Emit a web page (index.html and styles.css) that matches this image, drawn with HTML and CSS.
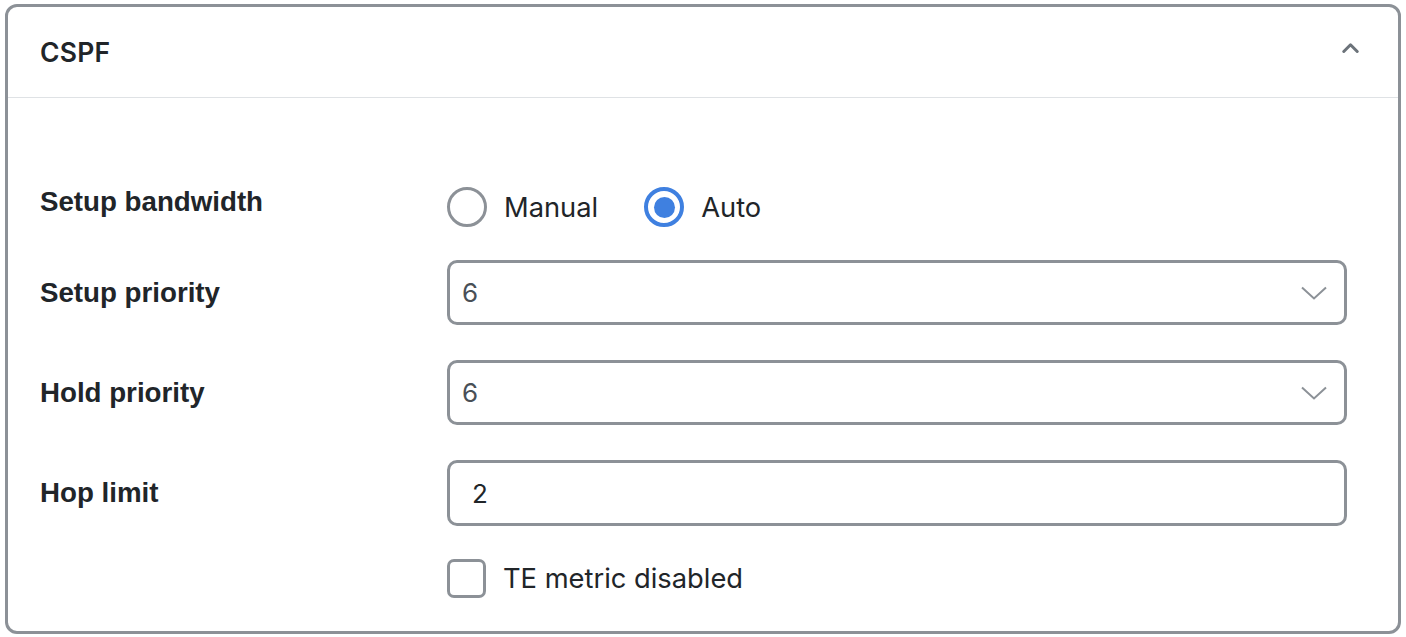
FILE: index.html
```html
<!DOCTYPE html>
<html lang="en">
<head>
<meta charset="utf-8">
<title>CSPF</title>
<link rel="stylesheet" href="styles.css">
</head>
<body>
<section class="card">
  <header class="card-header">
    <h2 class="card-title">CSPF</h2>
    <svg class="collapse-icon" width="17" height="10" viewBox="0 0 17 10" aria-hidden="true">
      <polyline points="1.8,8.5 8.5,1.8 15.2,8.5" fill="none" stroke="#6c737a" stroke-width="3" stroke-linecap="round" stroke-linejoin="round"/>
    </svg>
  </header>
  <div class="card-body">
    <div class="row row-radio">
      <div class="label label-top">Setup bandwidth</div>
      <div class="radio-group">
        <label class="radio-option"><span class="radio"></span><span class="opt-text">Manual</span></label>
        <label class="radio-option"><span class="radio checked"><span class="dot"></span></span><span class="opt-text">Auto</span></label>
      </div>
    </div>
    <div class="row row-field">
      <div class="label">Setup priority</div>
      <div class="select"><span class="value">6</span>
        <svg class="caret" width="26" height="14" viewBox="0 0 26 14" aria-hidden="true"><polyline points="1,1.5 13,12.5 25,1.5" fill="none" stroke="#8c9197" stroke-width="2"/></svg>
      </div>
    </div>
    <div class="row row-field">
      <div class="label">Hold priority</div>
      <div class="select"><span class="value">6</span>
        <svg class="caret" width="26" height="14" viewBox="0 0 26 14" aria-hidden="true"><polyline points="1,1.5 13,12.5 25,1.5" fill="none" stroke="#8c9197" stroke-width="2"/></svg>
      </div>
    </div>
    <div class="row row-input">
      <div class="label">Hop limit</div>
      <div class="input"><span class="value dark">2</span></div>
    </div>
    <div class="row row-check">
      <div class="label"></div>
      <label class="check-option"><span class="checkbox"></span><span class="opt-text">TE metric disabled</span></label>
    </div>
  </div>
</section>
</body>
</html>
```
FILE: styles.css
```css
* { box-sizing: border-box; }
html, body { margin: 0; padding: 0; background: #ffffff; }
body { font-family: "Liberation Sans", Arial, sans-serif; color: #212529; }

.card {
  margin: 4px 0 0 5px;
  width: 1396px;
  height: 630px;
  border: 3px solid #8c9197;
  border-radius: 12px;
  background: #fff;
  overflow: hidden;
}

.card-header {
  height: 91px;
  border-bottom: 1px solid #dfe2e5;
  display: flex;
  align-items: center;
  justify-content: space-between;
  padding: 0 39px 0 32px;
}
.card-title {
  margin: 0;
  font-family: Inter, "Liberation Sans", sans-serif;
  font-weight: 600;
  font-size: 26.5px;
  color: #212529;
  letter-spacing: 0.2px;
}
.collapse-icon { display: block; margin-top: -8px; }

.card-body { padding: 89px 51px 0 32px; }

.row {
  display: grid;
  grid-template-columns: 407px 1fr;
  align-items: center;
}
.row-radio { height: 40px; margin-bottom: 33px; }
.row-field { height: 65px; margin-bottom: 35px; }
.row-input { height: 66px; margin-bottom: 33px; }
.row-check { height: 39px; }

.label {
  font-weight: 700;
  font-size: 27.7px;
  line-height: 28px;
  color: #212529;
}
.label-top { align-self: start; padding-top: 1px; }

.radio-group { display: flex; align-items: center; gap: 46px; }
.radio-option, .check-option { display: flex; align-items: center; gap: 17px; }
.opt-text {
  font-family: Inter, "Liberation Sans", sans-serif;
  font-size: 27.3px;
  color: #212529;
}
.radio {
  width: 40px; height: 40px;
  border: 3px solid #8c9197;
  border-radius: 50%;
  display: flex; align-items: center; justify-content: center;
}
.radio.checked { border: 4px solid #3f80e0; }
.dot { width: 21px; height: 21px; border-radius: 50%; background: #3f80e0; }

.select, .input {
  height: 100%;
  border: 3px solid #8c9197;
  border-radius: 10px;
  display: flex;
  align-items: center;
  justify-content: space-between;
  padding: 0 17px 0 12px;
}
.input { padding-left: 22px; }
.value {
  font-family: Inter, "Liberation Sans", sans-serif;
  font-size: 26px;
  color: #495057;
}
.value.dark { color: #212529; }
.caret { display: block; }

.checkbox {
  width: 39px; height: 39px;
  border: 3px solid #8c9197;
  border-radius: 7px;
}
```
